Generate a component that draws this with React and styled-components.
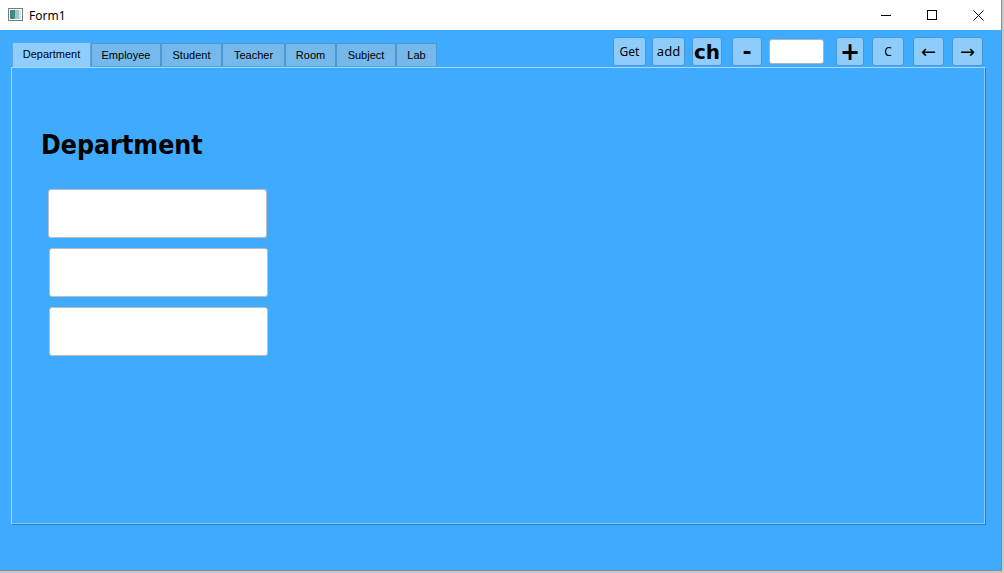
import React from 'react';
import styled, { createGlobalStyle } from 'styled-components';

const GlobalStyle = createGlobalStyle`
  html, body {
    margin: 0;
    padding: 0;
    background: #c8c8c8;
  }
  * {
    box-sizing: border-box;
  }
`;

const tabs = [
  { name: 'Department', width: 79 },
  { name: 'Employee', width: 70 },
  { name: 'Student', width: 61 },
  { name: 'Teacher', width: 63 },
  { name: 'Room', width: 51 },
  { name: 'Subject', width: 60 },
  { name: 'Lab', width: 41 },
];

const tools = [
  { label: 'Get', width: 33, size: 12 },
  { label: 'add', width: 33, size: 13, gap: 6 },
  { label: 'ch', width: 30, size: 20, bold: true, gap: 7 },
  { label: '-', width: 30, size: 22, bold: true, gap: 10 },
];

const toolsAfter = [
  { label: '+', width: 28, size: 24, bold: true, gap: 12 },
  { label: 'C', width: 32, size: 12, gap: 8 },
  { label: '\u2190', width: 31, size: 18, gap: 9 },
  { label: '\u2192', width: 31, size: 18, gap: 8 },
];

const App = () => {
  return (
    <>
      <GlobalStyle />
      <Window>
        <TitleBar>
          <AppIcon width="15" height="13" viewBox="0 0 15 13">
            <rect x="0.5" y="0.5" width="14" height="12" fill="#fff" stroke="#7a7a7a" />
            <rect x="2" y="2" width="5" height="9" fill="#3c8a8a" />
            <rect x="7" y="2" width="4" height="9" fill="#9bc7c9" />
            <rect x="11" y="2" width="2" height="9" fill="#d8e6ea" />
          </AppIcon>
          <Title>Form1</Title>
          <Controls>
            <ControlButton>
              <svg width="10" height="10" viewBox="0 0 10 10">
                <line x1="0" y1="5.5" x2="10" y2="5.5" stroke="#000" strokeWidth="1" />
              </svg>
            </ControlButton>
            <ControlButton>
              <svg width="10" height="10" viewBox="0 0 10 10">
                <rect x="0.5" y="0.5" width="9" height="9" fill="none" stroke="#000" strokeWidth="1" />
              </svg>
            </ControlButton>
            <ControlButton>
              <svg width="11" height="11" viewBox="0 0 11 11">
                <path d="M0.5 0.5 L10.5 10.5 M10.5 0.5 L0.5 10.5" stroke="#000" strokeWidth="1" />
              </svg>
            </ControlButton>
          </Controls>
        </TitleBar>
        <Client>
          <HeaderRow>
            <TabStrip>
              {tabs.map((t, i) => (
                <Tab key={t.name} w={t.width} active={i === 0}>{t.name}</Tab>
              ))}
            </TabStrip>
            <Toolbar>
              {tools.map(b => (
                <ToolButton key={b.label} w={b.width} size={b.size} bold={b.bold} gap={b.gap}>
                  {b.label}
                </ToolButton>
              ))}
              <NumberBox />
              {toolsAfter.map(b => (
                <ToolButton key={b.label} w={b.width} size={b.size} bold={b.bold} gap={b.gap}>
                  {b.label}
                </ToolButton>
              ))}
            </Toolbar>
          </HeaderRow>
          <Panel>
            <Heading>Department</Heading>
            <Fields>
              <Field shift={0} />
              <Field shift={1} />
              <Field shift={1} />
            </Fields>
          </Panel>
        </Client>
      </Window>
    </>
  );
};

const Window = styled.div`
  width: 1002px;
  height: 571px;
  display: flex;
  flex-direction: column;
  background: #fff;
  border-right: 1px solid #8a8a8a;
  border-bottom: 1px solid #8a8a8a;
`;

const TitleBar = styled.div`
  height: 30px;
  display: flex;
  align-items: center;
  padding-left: 8px;
  background: #fff;
  font-family: "Noto Sans", "Liberation Sans", sans-serif;
`;

const AppIcon = styled.svg`
  margin-top: -1px;
`;

const Title = styled.span`
  margin-left: 6px;
  font-size: 12px;
  color: #000;
`;

const Controls = styled.div`
  margin-left: auto;
  display: flex;
  height: 100%;
`;

const ControlButton = styled.div`
  width: 46px;
  height: 100%;
  display: flex;
  align-items: center;
  justify-content: center;
`;

const Client = styled.div`
  flex: 1;
  background: #3eabff;
  padding: 7px 0 0 11px;
  display: flex;
  flex-direction: column;
`;

const HeaderRow = styled.div`
  width: 975px;
  height: 30px;
  display: flex;
  justify-content: space-between;
`;

const TabStrip = styled.div`
  display: flex;
  align-items: flex-end;
  padding-left: 1px;
`;

const Tab = styled.div`
  width: ${p => p.w}px;
  height: ${p => (p.active ? 25 : 23)}px;
  margin-bottom: ${p => (p.active ? 0 : 1)}px;
  padding-bottom: ${p => (p.active ? 2 : 0)}px;
  display: flex;
  align-items: center;
  justify-content: center;
  background: ${p => (p.active ? '#8fcdff' : '#74b8ec')};
  border: 1px solid ${p => (p.active ? '#5ea8e2' : '#4f97d2')};
  border-bottom: none;
  border-radius: 2px 2px 0 0;
  font-family: "Liberation Sans", Arial, sans-serif;
  font-size: 11px;
  color: #000;
`;

const Toolbar = styled.div`
  display: flex;
  align-items: flex-start;
  padding-right: 3px;
`;

const ToolButton = styled.div`
  width: ${p => p.w}px;
  height: 29px;
  margin-left: ${p => p.gap || 0}px;
  display: flex;
  align-items: center;
  justify-content: center;
  background: #8ecdfb;
  border: 1px solid #4a95d4;
  border-radius: 3px;
  font-family: ${p => (p.size < 14 ? '"Noto Sans", "Liberation Sans", sans-serif' : '"DejaVu Sans", Verdana, sans-serif')};
  font-size: ${p => p.size}px;
  font-weight: ${p => (p.bold ? 700 : 400)};
  color: #000;
  line-height: 1;
`;

const NumberBox = styled.div`
  width: 55px;
  height: 25px;
  margin-top: 2px;
  margin-left: 7px;
  background: #fff;
  border: 1px solid #a9b4bd;
  border-radius: 3px;
`;

const Panel = styled.div`
  width: 975px;
  height: 458px;
  border-top: 1px solid #a8d6fb;
  border-left: 1px solid #a8d6fb;
  border-right: 1px solid #2d7cbc;
  border-bottom: 1px solid #2d7cbc;
  box-shadow: inset -1px -1px 0 #8ccaf8;
  padding: 61px 0 0 29px;
`;

const Heading = styled.h1`
  margin: 0;
  font-family: "DejaVu Sans Condensed", "DejaVu Sans", sans-serif;
  font-size: 26.5px;
  font-weight: 700;
  line-height: 32px;
  color: #000;
`;

const Fields = styled.div`
  display: flex;
  flex-direction: column;
  gap: 10px;
  margin-top: 28px;
  padding-left: 7px;
`;

const Field = styled.div`
  width: 219px;
  height: 49px;
  margin-left: ${p => p.shift}px;
  background: #fff;
  border: 1px solid #b8bec4;
  border-radius: 3px;
`;

export default App;
